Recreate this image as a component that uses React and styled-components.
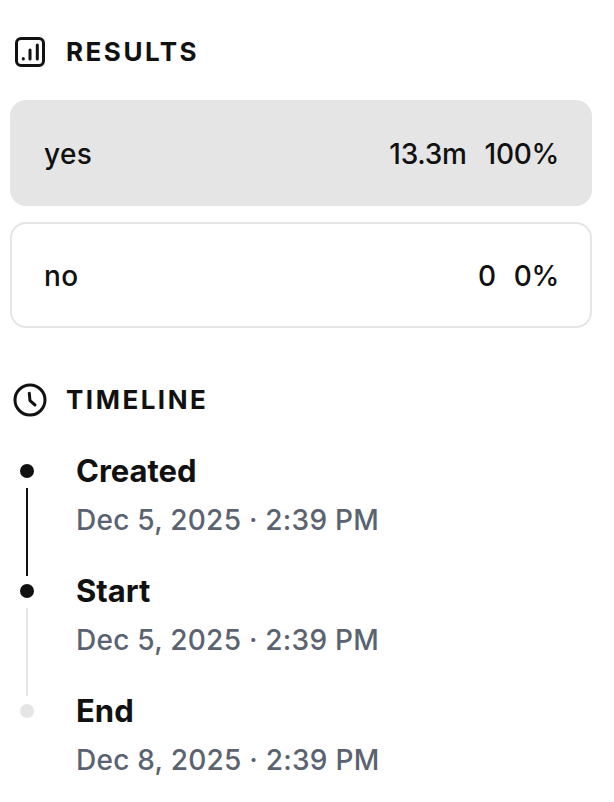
import React from "react";
import styled, { createGlobalStyle } from "styled-components";

const GlobalStyle = createGlobalStyle`
  html, body {
    margin: 0;
    padding: 0;
    background: #ffffff;
  }
  body {
    font-family: Inter, "Liberation Sans", sans-serif;
    color: #111111;
  }
`;

const Page = styled.div`
  width: 614px;
  height: 802px;
  overflow: hidden;
  box-sizing: border-box;
  padding: 32px 22px 0 10px;
`;

const SectionHeader = styled.div`
  display: flex;
  align-items: center;
  gap: 19px;
  height: 40px;
  padding-left: 3px;
`;

const IconSlot = styled.div`
  display: flex;
  align-items: center;
  justify-content: center;
  width: 34px;
  height: 34px;
`;

const SectionTitle = styled.h2`
  margin: 0;
  font-size: 26px;
  font-weight: 700;
  letter-spacing: 2.5px;
  line-height: 42px;
  color: #111111;
`;

const Options = styled.div`
  display: flex;
  flex-direction: column;
  gap: 16px;
  margin-top: 28px;
  margin-bottom: 52px;
`;

const Option = styled.div`
  display: flex;
  justify-content: space-between;
  align-items: center;
  height: 106px;
  box-sizing: border-box;
  padding: 2px 31px 0 32px;
  border-radius: 16px;
  border: 2px solid #e5e5e5;
  background: ${({ $active }) => ($active ? "#e5e5e5" : "#ffffff")};
  font-size: 28px;
  font-weight: 500;
  color: #111111;
`;

const OptionLabel = styled.span`
  letter-spacing: 0.4px;
`;

const OptionStats = styled.div`
  display: flex;
  gap: 18px;
  letter-spacing: -0.3px;
`;

const Timeline = styled.div`
  display: flex;
  flex-direction: column;
  margin-top: 32px;
  padding-left: 9px;
`;

const Step = styled.div`
  display: flex;
  gap: 41px;
  height: 120px;
`;

const Rail = styled.div`
  display: flex;
  flex-direction: column;
  align-items: center;
  width: 16px;
  padding-top: 12px;
`;

const Dot = styled.div`
  flex: none;
  width: 14px;
  height: 14px;
  border-radius: 50%;
  background: ${({ $done }) => ($done ? "#111111" : "#e5e5e5")};
`;

const Line = styled.div`
  flex: none;
  width: 2px;
  height: 88px;
  margin-top: 10px;
  background: ${({ $done }) => ($done ? "#111111" : "#e5e5e5")};
`;

const StepBody = styled.div`
  display: flex;
  flex-direction: column;
  gap: 10px;
`;

const StepTitle = styled.div`
  font-size: 31px;
  font-weight: 700;
  line-height: 38px;
  color: #111111;
`;

const StepDate = styled.div`
  font-size: 28px;
  font-weight: 500;
  letter-spacing: 0.25px;
  line-height: 40px;
  color: #5b6270;
`;

const ChartIcon = () => (
  <svg width="30" height="30" viewBox="0 0 30 30" fill="none" stroke="#111111" strokeWidth="3" strokeLinecap="round">
    <rect x="1.5" y="1.5" width="27" height="27" rx="4.5" />
    <path d="M8.3 21.5v.5" />
    <path d="M15 13v9" />
    <path d="M22.3 8v14" />
  </svg>
);

const ClockIcon = () => (
  <svg width="34" height="34" viewBox="0 0 34 34" fill="none" stroke="#111111" strokeWidth="3" strokeLinecap="round" strokeLinejoin="round">
    <circle cx="17" cy="17" r="15" />
    <path d="M16.3 10.3l.7 7.4l5 4.3" />
  </svg>
);

const results = [
  { label: "yes", amount: "13.3m", share: "100%", active: true },
  { label: "no", amount: "0", share: "0%", active: false },
];

const steps = [
  { title: "Created", date: "Dec 5, 2025 · 2:39 PM", done: true, line: true },
  { title: "Start", date: "Dec 5, 2025 · 2:39 PM", done: true, line: false },
  { title: "End", date: "Dec 8, 2025 · 2:39 PM", done: false },
];

const App = () => (
  <>
    <GlobalStyle />
    <Page>
      <SectionHeader>
        <IconSlot>
          <ChartIcon />
        </IconSlot>
        <SectionTitle>RESULTS</SectionTitle>
      </SectionHeader>
      <Options>
        {results.map((r) => (
          <Option key={r.label} $active={r.active}>
            <OptionLabel>{r.label}</OptionLabel>
            <OptionStats>
              <span>{r.amount}</span>
              <span>{r.share}</span>
            </OptionStats>
          </Option>
        ))}
      </Options>
      <SectionHeader>
        <IconSlot>
          <ClockIcon />
        </IconSlot>
        <SectionTitle>TIMELINE</SectionTitle>
      </SectionHeader>
      <Timeline>
        {steps.map((s, i) => (
          <Step key={s.title}>
            <Rail>
              <Dot $done={s.done} />
              {i < steps.length - 1 && <Line $done={s.line} />}
            </Rail>
            <StepBody>
              <StepTitle>{s.title}</StepTitle>
              <StepDate>{s.date}</StepDate>
            </StepBody>
          </Step>
        ))}
      </Timeline>
    </Page>
  </>
);

export default App;
